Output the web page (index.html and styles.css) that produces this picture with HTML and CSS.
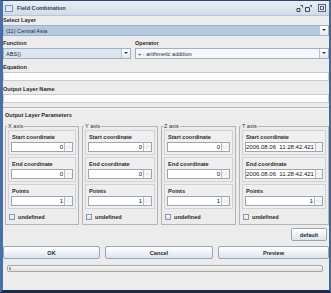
FILE: index.html
```html
<!DOCTYPE html>
<html lang="en">
<head>
    <meta charset="UTF-8">
    <title>Field Combination</title>
    <link rel="stylesheet" href="styles.css">
</head>
<body>
    <div class="window">
        <div class="titlebar">
            <span class="app-icon"></span>
            <span class="title">Field Combination</span>
            <span class="tb-buttons">
                <svg width="7" height="7" viewBox="0 0 7 7"><path d="M1 6.5h3M1 3.5v3M4 3.5v3M1 3.5h3M4.5 0.5h2v2" stroke="#3a4658" stroke-width="1" fill="none"/></svg>
                <svg width="7" height="7" viewBox="0 0 7 7"><path d="M0.5 2.5h4v4h-4z M5 0.5h1.5v1.5" stroke="#3a4658" stroke-width="1" fill="none"/></svg>
                <svg class="close" width="8" height="8" viewBox="0 0 8 8"><rect x="0.5" y="0.5" width="7" height="7" fill="#e4e9f0" stroke="#55657c"/><rect x="2.5" y="2.5" width="3" height="3" fill="none" stroke="#55657c"/></svg>
            </span>
        </div>

        <div class="content">
            <div class="label">Select Layer</div>
            <div class="combo combo-selected">
                <span class="combo-text">(11) Central Asia</span>
                <span class="arrow"></span>
            </div>

            <div class="row-two">
                <div class="col-function">
                    <div class="label">Function</div>
                    <div class="combo combo-light">
                        <span class="combo-text">ABS()</span>
                        <span class="arrow"></span>
                    </div>
                </div>
                <div class="col-operator">
                    <div class="label">Operator</div>
                    <div class="combo combo-white">
                        <span class="combo-text">+ - arithmetic addition</span>
                        <span class="arrow"></span>
                    </div>
                </div>
            </div>

            <div class="label label-gap">Equation</div>
            <div class="textfield"></div>

            <div class="label label-gap">Output Layer Name</div>
            <div class="textfield"></div>

            <div class="separator"></div>

            <div class="label params-title">Output Layer Parameters</div>

            <div class="axes">
                <fieldset class="axis">
                    <legend>X axis</legend>
                    <div class="field-box">
                        <div class="label">Start coordinate</div>
                        <div class="spinner"><span class="spin-value">0</span><span class="spin-btn"></span></div>
                    </div>
                    <div class="field-box">
                        <div class="label">End coordinate</div>
                        <div class="spinner"><span class="spin-value">0</span><span class="spin-btn"></span></div>
                    </div>
                    <div class="field-box">
                        <div class="label">Points</div>
                        <div class="spinner"><span class="spin-value">1</span><span class="spin-btn"></span></div>
                    </div>
                    <div class="check-row"><span class="checkbox"></span>undefined</div>
                </fieldset>

                <fieldset class="axis">
                    <legend>Y axis</legend>
                    <div class="field-box">
                        <div class="label">Start coordinate</div>
                        <div class="spinner"><span class="spin-value">0</span><span class="spin-btn"></span></div>
                    </div>
                    <div class="field-box">
                        <div class="label">End coordinate</div>
                        <div class="spinner"><span class="spin-value">0</span><span class="spin-btn"></span></div>
                    </div>
                    <div class="field-box">
                        <div class="label">Points</div>
                        <div class="spinner"><span class="spin-value">1</span><span class="spin-btn"></span></div>
                    </div>
                    <div class="check-row"><span class="checkbox"></span>undefined</div>
                </fieldset>

                <fieldset class="axis">
                    <legend>Z axis</legend>
                    <div class="field-box">
                        <div class="label">Start coordinate</div>
                        <div class="spinner"><span class="spin-value">0</span><span class="spin-btn"></span></div>
                    </div>
                    <div class="field-box">
                        <div class="label">End coordinate</div>
                        <div class="spinner"><span class="spin-value">0</span><span class="spin-btn"></span></div>
                    </div>
                    <div class="field-box">
                        <div class="label">Points</div>
                        <div class="spinner"><span class="spin-value">1</span><span class="spin-btn"></span></div>
                    </div>
                    <div class="check-row"><span class="checkbox"></span>undefined</div>
                </fieldset>

                <fieldset class="axis">
                    <legend>T axis</legend>
                    <div class="field-box">
                        <div class="label">Start coordinate</div>
                        <div class="spinner"><span class="spin-value">2006.08.06 &nbsp;11:28:42.421</span><span class="spin-btn"></span></div>
                    </div>
                    <div class="field-box">
                        <div class="label">End coordinate</div>
                        <div class="spinner"><span class="spin-value">2006.08.06 &nbsp;11:28:42.421</span><span class="spin-btn"></span></div>
                    </div>
                    <div class="field-box">
                        <div class="label">Points</div>
                        <div class="spinner"><span class="spin-value">1</span><span class="spin-btn"></span></div>
                    </div>
                    <div class="check-row"><span class="checkbox"></span>undefined</div>
                </fieldset>
            </div>

            <div class="default-row">
                <button class="btn btn-default">default</button>
            </div>

            <div class="button-row">
                <button class="btn btn-ok">OK</button>
                <button class="btn btn-cancel">Cancel</button>
                <button class="btn btn-preview">Preview</button>
            </div>

            <div class="progress"><span class="progress-mark"></span></div>
        </div>
    </div>
</body>
</html>
```

FILE: styles.css
```css
* {
    box-sizing: border-box;
}
body {
    margin: 0;
    padding: 0;
    font-family: "Liberation Sans", Arial, sans-serif;
    font-size: 5.6px;
    color: #2a2a2a;
    background: #ececec;
}
.window {
    width: 331px;
    height: 293px;
    display: flex;
    flex-direction: column;
    background: #ececec;
    border-top: 1px solid #2d4470;
    border-left: 3px solid #4a6ea6;
    border-right: 2px solid #4d6690;
    border-bottom: 3px solid #1c2a4c;
    overflow: hidden;
}
.titlebar {
    height: 15px;
    flex: none;
    display: flex;
    align-items: center;
    padding: 0 3px 0 2px;
    background: linear-gradient(#e9eef4, #d2dbe6);
    border-bottom: 1px solid #b9c4d2;
}
.app-icon {
    width: 8px;
    height: 7px;
    border: 1px solid #7d95b8;
    background: #dfe8f3;
    margin-right: 4px;
}
.title {
    font-weight: bold;
    color: #34405a;
    flex: 1;
}
.tb-buttons {
    display: flex;
    align-items: center;
    gap: 2px;
}
.tb-buttons .close {
    margin-left: 4px;
}
.content {
    flex: 1;
    display: flex;
    flex-direction: column;
}
.label {
    height: 8px;
    line-height: 8px;
    font-weight: bold;
    white-space: nowrap;
}
.combo {
    height: 11px;
    margin-top: 1px;
    display: flex;
    align-items: center;
    border: 1px solid #9fb0c6;
}
.combo-text {
    flex: 1;
    padding-left: 2px;
    white-space: nowrap;
    overflow: hidden;
}
.combo-selected {
    background: #b5c9e1;
    border-color: #9cb2cf;
}
.combo-light {
    background: #dce6f1;
}
.combo-white {
    background: #f5f7fa;
}
.arrow {
    width: 9px;
    height: 9px;
    background: linear-gradient(#ffffff, #e4e9ef);
    border-left: 1px solid #b9c4d2;
    position: relative;
}
.arrow::after {
    content: "";
    position: absolute;
    left: 2px;
    top: 3px;
    border-left: 2px solid transparent;
    border-right: 2px solid transparent;
    border-top: 2px solid #2c3440;
}
.row-two {
    display: flex;
    gap: 4px;
    margin-top: 3px;
}
.col-function {
    width: 128px;
}
.col-operator {
    flex: 1;
}
.label-gap {
    margin-top: 4px;
}
.textfield {
    height: 9px;
    margin-top: 1px;
    background: #ffffff;
    border: 1px solid #c4ccd6;
}
.separator {
    margin-top: 4px;
    height: 2px;
    border-top: 1px solid #b2b2b2;
    border-bottom: 1px solid #fafafa;
}
.params-title {
    margin-top: 2px;
    padding-left: 2px;
}
.axes {
    display: grid;
    grid-template-columns: 74px 76px 75px 1fr;
    gap: 3px;
    margin-top: 3px;
    padding-left: 2px;
}
.axis {
    margin: 0;
    padding: 0 2px 3px 2px;
    border: 1px solid #b4b4b4;
    min-width: 0;
}
.axis legend {
    padding: 0 1px;
    margin-left: -1px;
    height: 8px;
    line-height: 8px;
    color: #333;
}
.field-box {
    margin-top: 2px;
    padding: 2px;
    border: 1px solid #d2d2d2;
    background: #efefef;
}
.field-box:first-of-type {
    margin-top: 0;
}
.field-box .label {
    padding-left: 1px;
}
.spinner {
    height: 10px;
    margin-top: 1px;
    display: flex;
    align-items: center;
    background: #ffffff;
    border: 1px solid #9aa6b4;
}
.spin-value {
    flex: 1;
    text-align: right;
    padding-right: 1px;
    font-size: 6px;
    white-space: nowrap;
    color: #111;
}
.spin-btn {
    width: 8px;
    height: 8px;
    border-left: 1px solid #b5bfcb;
    background: linear-gradient(#fbfcfd 0, #eef1f4 45%, #b9c2cc 45%, #b9c2cc 55%, #eef1f4 55%, #fbfcfd 100%);
}
.check-row {
    margin-top: 4px;
    display: flex;
    align-items: center;
    gap: 3px;
    font-weight: bold;
    height: 8px;
    padding-left: 1px;
}
.checkbox {
    width: 6px;
    height: 6px;
    border: 1px solid #8898ae;
    background: linear-gradient(#f7f9fc, #d9e2ec);
}
.default-row {
    display: flex;
    justify-content: flex-end;
    margin-top: 3px;
    padding-right: 2px;
}
.btn {
    font-family: "Liberation Sans", Arial, sans-serif;
    font-size: 5.6px;
    font-weight: bold;
    color: #2a2a2a;
    height: 13px;
    padding: 0;
    margin: 0;
    border: 1px solid #98a5b5;
    border-radius: 2px;
    background: linear-gradient(#ffffff, #f0f3f7 50%, #dbe3ec);
}
.btn-default {
    width: 36px;
}
.button-row {
    display: flex;
    gap: 5px;
    margin-top: 5px;
}
.btn-ok {
    width: 97px;
}
.btn-cancel {
    width: 108px;
}
.btn-preview {
    flex: 1;
}
.progress {
    margin: 6px 6px 0 4px;
    height: 7px;
    border: 1px solid #a6a6a6;
    border-radius: 2px;
    background: linear-gradient(#f4f4f4, #e2e2e2);
    display: flex;
    align-items: center;
    padding-left: 1px;
}
.progress-mark {
    width: 2px;
    height: 3px;
    border: 1px solid #a0a0a0;
    background: #ffffff;
}
```
